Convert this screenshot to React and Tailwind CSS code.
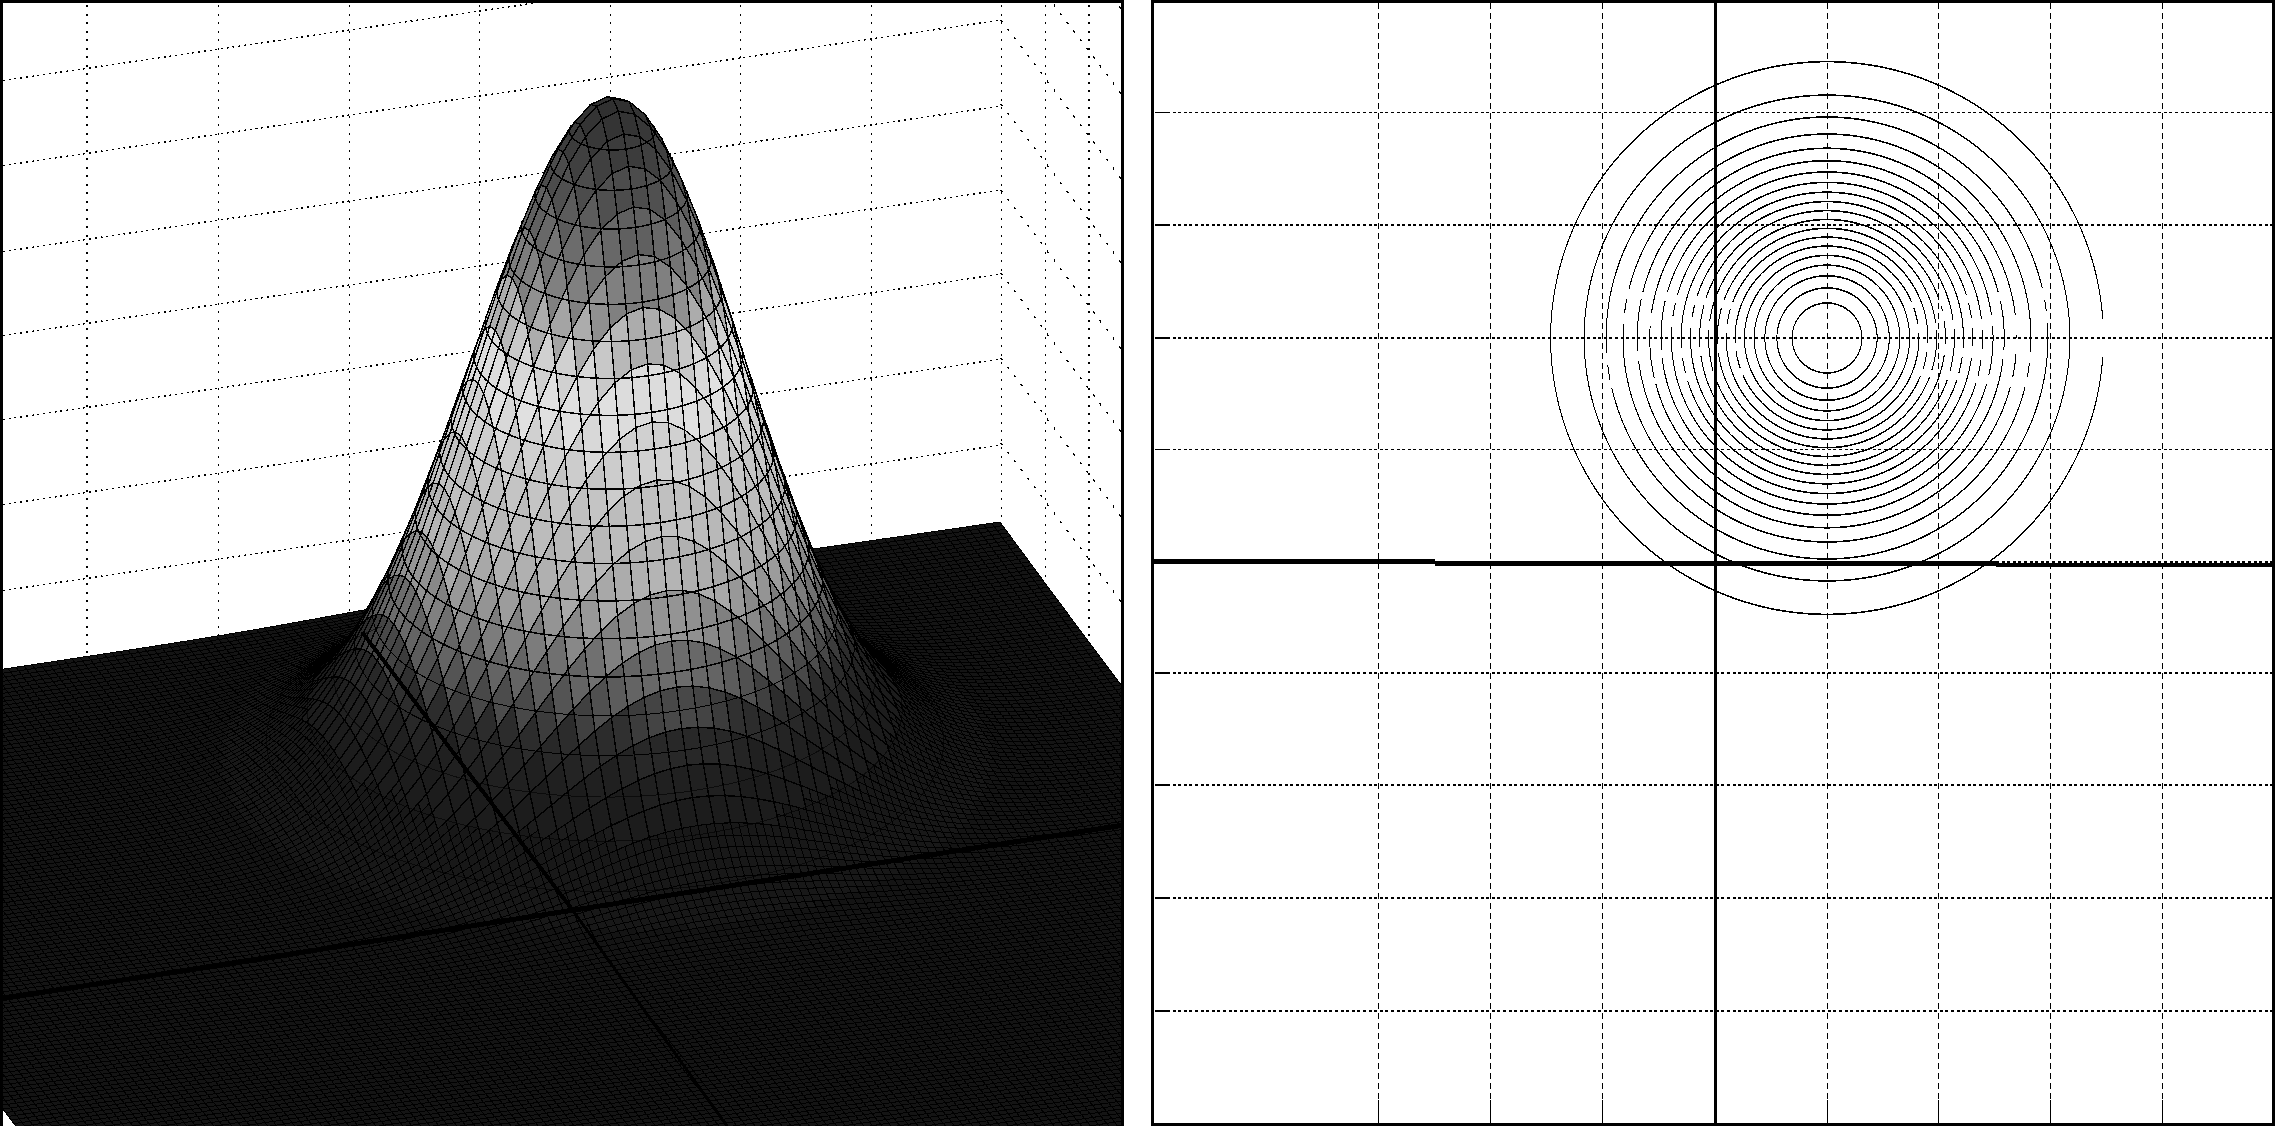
const N = 80;
const STEP = 0.125;
const Zs = (x, y) => Math.exp(-((x - 1) ** 2 + (y - 2) ** 2) / 2);
const proj = (x, y, z) => {
  const r2 = (x - 1) ** 2 + (y - 2) ** 2;
  return [574 + 130 * x - 44 * y - 3 * z - 16 * (1 - z) * Math.exp(-r2 / 18), 908 - 19.2 * x - 58 * y - 674 * z];
};
const TABLE = [
  [0, 0x17], [0.04, 0x18], [0.11, 0x1c], [0.164, 0x22], [0.216, 0x30], [0.248, 0x50], [0.3, 0x70],
  [0.38, 0xa8], [0.43, 0xb8], [0.52, 0xc8], [0.57, 0xd4], [0.62, 0xe2], [0.667, 0xd8], [0.714, 0xb0],
  [0.762, 0x88], [0.857, 0x60], [0.95, 0x3c], [1, 0x30],
];
const shade = (z) => {
  for (let i = 1; i < TABLE.length; i++) {
    if (z <= TABLE[i][0]) {
      const [a, ca] = TABLE[i - 1];
      const [b, cb] = TABLE[i];
      const v = Math.round(ca + ((cb - ca) * (z - a)) / (b - a));
      const h = (v & 0xfc).toString(16).padStart(2, "0");
      return `#${h}${h}${h}`;
    }
  }
  return "#303030";
};
const fmt = (p) => `${p[0].toFixed(1)} ${p[1].toFixed(1)}`;

function buildMesh() {
  const out = [];
  let cur = null;
  const push = (fill, width, d) => {
    if (cur && cur.fill === fill && cur.width === width) cur.d += d;
    else {
      cur = { fill, width, d };
      out.push(cur);
    }
  };
  const quad = (x0, y0, s) => {
    const x1 = x0 + s, y1 = y0 + s;
    const zs = [Zs(x0, y0), Zs(x1, y0), Zs(x1, y1), Zs(x0, y1)];
    const pts = [proj(x0, y0, zs[0]), proj(x1, y0, zs[1]), proj(x1, y1, zs[2]), proj(x0, y1, zs[3])];
    if (pts.every((p) => p[0] < 0) || pts.every((p) => p[0] > 1124) || pts.every((p) => p[1] > 1126)) return;
    const z = (zs[0] + zs[1] + zs[2] + zs[3]) / 4;
    return { z, d: `M${pts.map(fmt).join("L")}Z` };
  };
  for (let j = N - 1; j >= 0; j--) {
    for (let i = N - 1; i >= 0; i--) {
      const x0 = -5 + i * STEP, y0 = -5 + j * STEP;
      const q = quad(x0, y0, STEP);
      if (!q) continue;
      if (q.z < 0.1) {
        const h = STEP / 2;
        const subs = [[h, h], [0, h], [h, 0], [0, 0]];
        subs.forEach(([a, b]) => {
          const s = quad(x0 + a, y0 + b, h);
          if (s) push(shade(s.z), 1, s.d);
        });
      } else {
        push(shade(q.z), 1.4, q.d);
      }
    }
  }
  return out;
}
const MESH = buildMesh();

const LEVELS = Array.from({ length: 20 }, (_, i) => i + 1);
const radius = (k) => Math.sqrt(-2 * Math.log(k / 21));

function contour3d(k) {
  const z = k / 21, r = radius(k);
  let d = "", pen = false;
  for (let a = 0; a <= 240; a++) {
    const t = (a / 240) * Math.PI * 2;
    const x = 1 + r * Math.cos(t), y = 2 + r * Math.sin(t);
    const vis = -44 * (x - 1) * z - 130 * (y - 2) * z + 12.4 > 0;
    if (vis) {
      d += (pen ? "L" : "M") + fmt(proj(x, y, z));
      pen = true;
    } else pen = false;
  }
  return d;
}

const GAPS = {
  1: [[1, 320, 354]],
  5: [[1, 320, 332], [1, 341, 354]],
  8: [[1, 320, 328]],
  9: [[1, 347, 356]],
  10: [[-1, 318, 326]],
  12: [[1, 312, 320]],
};
const YS = 1.6;
function contour2d(k) {
  const r = radius(k) * 112;
  const extra =
    k >= 3 && k <= 15
      ? [
          [k % 2 ? 1 : -1, 310 + k, 317 + k],
          [k % 2 ? -1 : 1, 358 - k, 365 - k],
          [k % 3 ? -1 : 1, 288 + k, 293 + k],
          [k % 3 ? 1 : -1, 384 - k, 389 - k],
        ]
      : [];
  const gaps = [...(GAPS[k] || []), ...extra];
  let d = "", pen = false;
  for (let a = 0; a <= 360; a++) {
    const t = (a / 360) * Math.PI * 2;
    const x = 1827 + r * Math.cos(t), y = 338 + r * Math.sin(t);
    const side = Math.cos(t) > 0 ? 1 : -1;
    const hidden = gaps.some((g) => g[0] === side && y > g[1] && y < g[2]);
    if (hidden) {
      pen = false;
      continue;
    }
    d += `${pen ? "L" : "M"}${x.toFixed(1)} ${(y / YS).toFixed(2)}`;
    pen = true;
  }
  return d;
}

const WALL_V = [87, 218, 349, 479, 610, 740, 871, 1001, 1045, 1089];
const WALL_Y0 = [81, 166, 252, 336, 420, 505, 591];
const SIDE_Y = [-150, -65, 20, 104, 190, 273, 358, 443];
const GRID_V = [1378, 1490, 1602, 1827, 1938, 2050, 2162];
const GRID_H = [[112, 1], [225, 2], [338, 2], [449, 1], [673, 2], [785, 2], [898, 2], [1011, 2]];

export default function App() {
  return (
    <div className="flex h-[1126px] w-[2275px] justify-between overflow-hidden bg-white">
      <div className="h-full w-[1124px] border-[3px] border-b-0 border-black">
        <svg className="block h-[1123px] w-[1118px]" viewBox="3 3 1118 1123">
          <g stroke="#000" fill="none" shapeRendering="crispEdges">
            {WALL_V.map((x) => (
              <line key={x} x1={x} y1="5" x2={x} y2="720" strokeWidth={x === 87 || x === 1089 ? 2 : 1} strokeDasharray="2.4 6.1" />
            ))}
            {WALL_Y0.map((y) => (
              <line key={y} x1="3" y1={y - 0.44} x2="1001" y2={y - 146} strokeWidth="1.4" strokeDasharray="2 3.8" />
            ))}
            {SIDE_Y.map((y) => (
              <line key={y} x1="1001" y1={y} x2="1121" y2={y + 158.4} strokeWidth="1.4" strokeDasharray="2.4 8.5" />
            ))}
          </g>
          <g stroke="#000" shapeRendering="crispEdges">
            {MESH.map((m, i) => (
              <path key={i} d={m.d} fill={m.fill} strokeWidth={m.width} />
            ))}
          </g>
          <g stroke="#000" fill="none" shapeRendering="crispEdges">
            {LEVELS.map((k) => (
              <path key={k} d={contour3d(k)} strokeWidth={k <= 5 ? 1 : 1.5} strokeOpacity={k <= 3 ? 0.6 : 1} />
            ))}
          </g>
          <g stroke="#000" fill="none" shapeRendering="crispEdges">
            <path d="M0 999L574 910L1124 825" strokeWidth="5" />
            <path d="M362 632L574 912" strokeWidth="4" />
            <path d="M574 912L727 1126" strokeWidth="3" />
          </g>
        </svg>
      </div>
      <div className="h-full w-[1124px] border-[3px] border-black">
        <svg className="block h-[1120px] w-[1118px]" viewBox="1154 3 1118 1120">
          <g stroke="#000" fill="none" shapeRendering="crispEdges">
            {GRID_V.map((x) => (
              <g key={x}>
                <line x1={x} y1="3" x2={x} y2="1100" strokeWidth="1" strokeDasharray="6 4" />
                <line x1={x} y1="1100" x2={x} y2="1123" strokeWidth="1" />
              </g>
            ))}
            {GRID_H.map(([y, w]) => (
              <g key={y}>
                <line x1="1167" y1={y} x2="2272" y2={y} strokeWidth={w} strokeDasharray="3 2.6" />
                <line x1="1155" y1={y} x2="1167" y2={y} strokeWidth={w} />
              </g>
            ))}
          </g>
          <g stroke="#000" fill="none" strokeWidth="1" shapeRendering="crispEdges" transform={`scale(1 ${YS})`}>
            {LEVELS.map((k) => (
              <path key={k} d={contour2d(k)} />
            ))}
          </g>
          <g stroke="#000" fill="none" shapeRendering="crispEdges">
            <line x1="1715" y1="3" x2="1715" y2="1123" strokeWidth="3" />
            <line x1="1154" y1="561.5" x2="1435" y2="561.5" strokeWidth="5" />
            <line x1="1435" y1="563.5" x2="1996" y2="563.5" strokeWidth="5" />
            <line x1="1996" y1="565" x2="2272" y2="565" strokeWidth="4" />
            <line x1="1996" y1="562" x2="2272" y2="562" strokeWidth="2" strokeDasharray="3 2.6" />
          </g>
        </svg>
      </div>
    </div>
  );
}
